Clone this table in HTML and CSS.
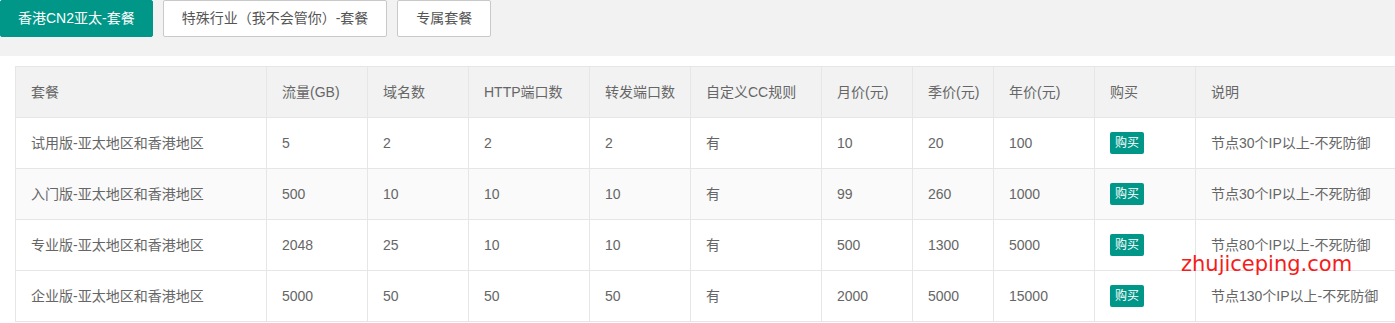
FILE: index.html
```html
<!DOCTYPE html>
<html lang="zh-CN">
<head>
<meta charset="utf-8">
<title>套餐</title>
<link rel="stylesheet" href="styles.css">
</head>
<body>
<div class="tabs">
  <a class="btn btn-primary">香港CN2亚太-套餐</a>
  <a class="btn">特殊行业（我不会管你）-套餐</a>
  <a class="btn">专属套餐</a>
</div>
<div class="card">
  <table class="plans">
    <colgroup>
      <col class="c1"><col class="c2"><col class="c3"><col class="c4"><col class="c5"><col class="c6"><col class="c7"><col class="c8"><col class="c9"><col class="c10"><col class="c11">
    </colgroup>
    <thead>
      <tr><th>套餐</th><th>流量(GB)</th><th>域名数</th><th>HTTP端口数</th><th>转发端口数</th><th>自定义CC规则</th><th>月价(元)</th><th>季价(元)</th><th>年价(元)</th><th>购买</th><th>说明</th></tr>
    </thead>
    <tbody>
      <tr><td>试用版-亚太地区和香港地区</td><td>5</td><td>2</td><td>2</td><td>2</td><td>有</td><td>10</td><td>20</td><td>100</td><td class="buy-cell"><span class="buy">购买</span></td><td>节点30个IP以上-不死防御</td></tr>
      <tr class="alt"><td>入门版-亚太地区和香港地区</td><td>500</td><td>10</td><td>10</td><td>10</td><td>有</td><td>99</td><td>260</td><td>1000</td><td class="buy-cell"><span class="buy">购买</span></td><td>节点30个IP以上-不死防御</td></tr>
      <tr><td>专业版-亚太地区和香港地区</td><td>2048</td><td>25</td><td>10</td><td>10</td><td>有</td><td>500</td><td>1300</td><td>5000</td><td class="buy-cell"><span class="buy">购买</span></td><td>节点80个IP以上-不死防御</td></tr>
      <tr><td>企业版-亚太地区和香港地区</td><td>5000</td><td>50</td><td>50</td><td>50</td><td>有</td><td>2000</td><td>5000</td><td>15000</td><td class="buy-cell"><span class="buy">购买</span></td><td>节点130个IP以上-不死防御</td></tr>
    </tbody>
  </table>
</div>
<div class="watermark">zhujiceping.com</div>
</body>
</html>
```
FILE: styles.css
```css
html, body {
  margin: 0;
  padding: 0;
  background: #f2f2f2;
  overflow: hidden;
  font-family: "Liberation Sans", "Noto Sans CJK SC", sans-serif;
  font-size: 14px;
  color: #666;
}
.tabs {
  display: flex;
  gap: 10px;
  height: 37px;
  align-items: flex-start;
}
.btn {
  box-sizing: border-box;
  display: inline-block;
  height: 37px;
  line-height: 35px;
  padding: 0 18px;
  border: 1px solid #c9c9c9;
  border-radius: 2px;
  background: #fff;
  color: #555;
  white-space: nowrap;
  font-size: 14px;
}
.btn-primary {
  background: #009688;
  border-color: #009688;
  color: #fff;
  padding: 0 17px;
}
.card {
  margin-top: 19px;
  background: #fff;
  padding: 10px 0 10px 15px;
  overflow: hidden;
}
.plans {
  border-collapse: collapse;
  table-layout: fixed;
  width: 1400px;
  border: 1px solid #e6e6e6;
}
.plans col.c1 { width: 251px; }
.plans col.c2 { width: 101px; }
.plans col.c3 { width: 101px; }
.plans col.c4 { width: 121px; }
.plans col.c5 { width: 101px; }
.plans col.c6 { width: 131px; }
.plans col.c7 { width: 91px; }
.plans col.c8 { width: 81px; }
.plans col.c9 { width: 101px; }
.plans col.c10 { width: 101px; }
.plans col.c11 { width: 320px; }
.plans th, .plans td {
  border: 1px solid #e6e6e6;
  padding: 15px 15px;
  line-height: 20px;
  height: 20px;
  text-align: left;
  font-weight: normal;
  white-space: nowrap;
  overflow: hidden;
}
.plans thead tr {
  background: #f2f2f2;
}
.plans tbody tr.alt {
  background: #fafafa;
}
.plans td.buy-cell {
  padding-top: 14px;
  padding-bottom: 14px;
  height: 22px;
}
.buy {
  display: inline-block;
  height: 22px;
  line-height: 22px;
  padding: 0 5px;
  font-size: 12px;
  background: #009688;
  color: #fff;
  border-radius: 2px;
  vertical-align: top;
}
.watermark {
  position: absolute;
  left: 1181px;
  top: 252px;
  font-family: "DejaVu Sans", sans-serif;
  font-size: 21px;
  color: #f51c1c;
}
```
